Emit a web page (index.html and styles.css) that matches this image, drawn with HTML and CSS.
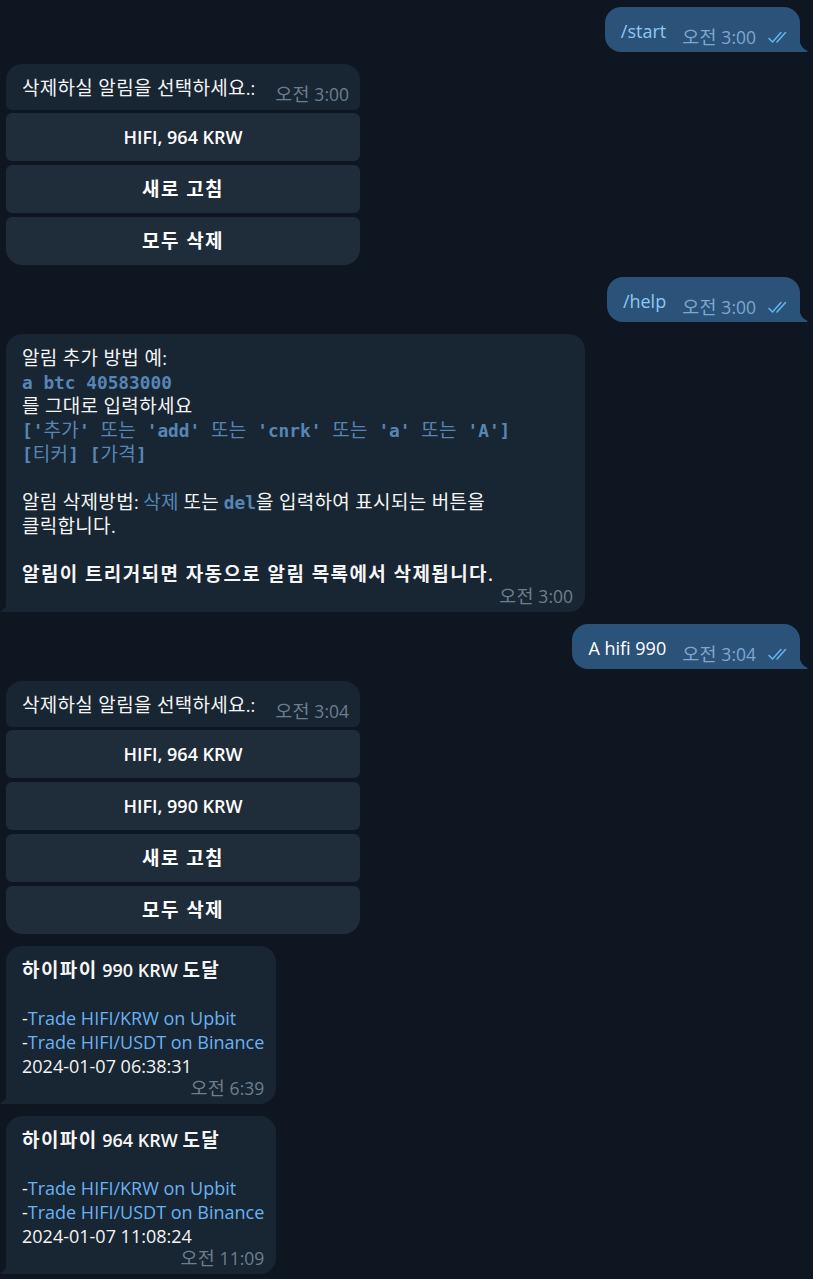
FILE: index.html
```html
<!DOCTYPE html>
<html lang="ko">
<head>
    <meta charset="UTF-8">
    <meta name="viewport" content="width=device-width, initial-scale=1.0">
    <title>Alert Bot</title>
    <link rel="stylesheet" href="styles.css">
</head>
<body>
    <div class="chat">
        <div class="row out">
            <div class="bubble out-bubble">
                <span class="cmd">/start</span>
                <span class="meta"><span><span class="ko">오전</span> 3:00</span>
                    <svg class="checks" viewBox="0 0 22 14"><path d="M1 8.5 L4.5 12 L13 2.5 M9 12 L17.5 2.5"/></svg>
                </span>
                <svg class="tail-out" viewBox="0 0 9 17"><path d="M0 0 C0 8 2.5 13 8 15.6 C9 16.1 8.6 17 7.6 17 L0 17 Z"/></svg>
            </div>
        </div>

        <div class="row in">
            <div class="kb-group">
                <div class="bubble in-bubble kb-msg">
                    <span><span class="ko">삭제하실 알림을 선택하세요</span>.:</span>
                    <span class="meta"><span class="ko">오전</span> 3:00</span>
                </div>
                <div class="kb">
                    <button>HIFI, 964 KRW</button>
                    <button><span class="ko">새로 고침</span></button>
                    <button class="last"><span class="ko">모두 삭제</span></button>
                </div>
            </div>
        </div>

        <div class="row out">
            <div class="bubble out-bubble">
                <span class="cmd">/help</span>
                <span class="meta"><span><span class="ko">오전</span> 3:00</span>
                    <svg class="checks" viewBox="0 0 22 14"><path d="M1 8.5 L4.5 12 L13 2.5 M9 12 L17.5 2.5"/></svg>
                </span>
                <svg class="tail-out" viewBox="0 0 9 17"><path d="M0 0 C0 8 2.5 13 8 15.6 C9 16.1 8.6 17 7.6 17 L0 17 Z"/></svg>
            </div>
        </div>

        <div class="row in">
            <div class="bubble in-bubble block-msg help">
                <div class="text">
                    <span class="ko">알림 추가 방법 예</span>:<br>
                    <code>a btc 40583000</code><br>
                    <span class="ko">를 그대로 입력하세요</span><br>
                    <code>['<span class="k ko">추가</span>' <span class="k ko">또는</span> 'add' <span class="k ko">또는</span> 'cnrk' <span class="k ko">또는</span> 'a' <span class="k ko">또는</span> 'A']</code><br>
                    <code>[<span class="k ko">티커</span>] [<span class="k ko">가격</span>]</code><br>
                    <br>
                    <span class="ko">알림 삭제방법</span>: <span class="hl ko">삭제</span> <span class="ko">또는</span> <code>del</code><span class="ko">을 입력하여 표시되는 버튼을</span><br>
                    <span class="ko">클릭합니다</span>.<br>
                    <br>
                    <b><span class="ko">알림이 트리거되면 자동으로 알림 목록에서 삭제됩니다</span>.</b>
                </div>
                <div class="meta"><span class="ko">오전</span> 3:00</div>
                <svg class="tail-in" viewBox="0 0 9 17"><path d="M9 0 C9 8 6.5 13 1 15.6 C0 16.1 0.4 17 1.4 17 L9 17 Z"/></svg>
            </div>
        </div>

        <div class="row out">
            <div class="bubble out-bubble">
                <span>A hifi 990</span>
                <span class="meta"><span><span class="ko">오전</span> 3:04</span>
                    <svg class="checks" viewBox="0 0 22 14"><path d="M1 8.5 L4.5 12 L13 2.5 M9 12 L17.5 2.5"/></svg>
                </span>
                <svg class="tail-out" viewBox="0 0 9 17"><path d="M0 0 C0 8 2.5 13 8 15.6 C9 16.1 8.6 17 7.6 17 L0 17 Z"/></svg>
            </div>
        </div>

        <div class="row in">
            <div class="kb-group">
                <div class="bubble in-bubble kb-msg">
                    <span><span class="ko">삭제하실 알림을 선택하세요</span>.:</span>
                    <span class="meta"><span class="ko">오전</span> 3:04</span>
                </div>
                <div class="kb">
                    <button>HIFI, 964 KRW</button>
                    <button>HIFI, 990 KRW</button>
                    <button><span class="ko">새로 고침</span></button>
                    <button class="last"><span class="ko">모두 삭제</span></button>
                </div>
            </div>
        </div>

        <div class="row in">
            <div class="bubble in-bubble block-msg">
                <div class="text">
                    <b><span class="ko">하이파이</span> 990 KRW <span class="ko">도달</span></b><br>
                    <br>
                    -<a href="#">Trade HIFI/KRW on Upbit</a><br>
                    -<a href="#">Trade HIFI/USDT on Binance</a><br>
                    2024-01-07 06:38:31
                </div>
                <div class="meta"><span class="ko">오전</span> 6:39</div>
                <svg class="tail-in" viewBox="0 0 9 17"><path d="M9 0 C9 8 6.5 13 1 15.6 C0 16.1 0.4 17 1.4 17 L9 17 Z"/></svg>
            </div>
        </div>

        <div class="row in">
            <div class="bubble in-bubble block-msg">
                <div class="text">
                    <b><span class="ko">하이파이</span> 964 KRW <span class="ko">도달</span></b><br>
                    <br>
                    -<a href="#">Trade HIFI/KRW on Upbit</a><br>
                    -<a href="#">Trade HIFI/USDT on Binance</a><br>
                    2024-01-07 11:08:24
                </div>
                <div class="meta"><span class="ko">오전</span> 11:09</div>
                <svg class="tail-in" viewBox="0 0 9 17"><path d="M9 0 C9 8 6.5 13 1 15.6 C0 16.1 0.4 17 1.4 17 L9 17 Z"/></svg>
            </div>
        </div>
    </div>
</body>
</html>
```

FILE: styles.css
```css
body {
    margin: 0;
    background-color: #0e1621;
    font-family: 'Open Sans', 'Noto Sans CJK KR', sans-serif;
    font-size: 18px;
    line-height: 24px;
    color: #f5f5f5;
}

.chat {
    display: flex;
    flex-direction: column;
    gap: 12px;
    padding: 7px 0 5px;
}

.row {
    display: flex;
}

.row.out {
    justify-content: flex-end;
    padding-right: 13px;
}

.row.in {
    justify-content: flex-start;
    padding-left: 6px;
}

.bubble {
    position: relative;
    border-radius: 16px;
}

/* hangul runs: wider, like the desktop client's korean fallback */
.ko {
    font-size: 19px;
    letter-spacing: 0.3px;
    line-height: 20px;
}

b .ko,
button .ko {
    letter-spacing: 1.4px;
}

.meta .ko {
    font-size: 18.5px;
}

/* outgoing */
.out-bubble {
    display: flex;
    align-items: flex-start;
    background-color: #2b5278;
    color: #ffffff;
    padding: 12px 10px 5px 16px;
    border-bottom-right-radius: 0;
}

.out-bubble .meta {
    display: flex;
    align-items: center;
    gap: 12px;
    margin-left: 16px;
    margin-top: 8px;
    color: #7da8d3;
}

.cmd {
    color: #8ec8f6;
}

.checks {
    width: 22px;
    height: 14px;
    fill: none;
    stroke: #62b3f0;
    stroke-width: 1.6;
    stroke-linecap: round;
    stroke-linejoin: round;
}

.tail-out {
    position: absolute;
    right: -8px;
    bottom: 0;
    width: 9px;
    height: 17px;
    fill: #2b5278;
}

.tail-in {
    position: absolute;
    left: -6px;
    bottom: 0;
    width: 9px;
    height: 17px;
    fill: #182533;
}

/* incoming */
.in-bubble {
    background-color: #182533;
}

.meta {
    color: #6d7f8f;
    font-size: 17.5px;
    line-height: 20px;
    white-space: nowrap;
}

.kb-group {
    width: 354px;
    display: flex;
    flex-direction: column;
    gap: 3px;
}

.kb-msg {
    display: flex;
    justify-content: space-between;
    align-items: flex-start;
    padding: 12px 11px 6px 16px;
    border-radius: 16px 16px 6px 6px;
}

.kb-msg .meta {
    margin-top: 8px;
}

.kb {
    display: grid;
    gap: 4px;
}

.kb button {
    height: 48px;
    border: none;
    border-radius: 6px;
    background-color: #1f2c3a;
    color: #ffffff;
    font-family: 'Open Sans', 'Noto Sans CJK KR', sans-serif;
    font-size: 18px;
    font-weight: 600;
    cursor: pointer;
}

.kb button.last {
    border-radius: 6px 6px 16px 16px;
}

.block-msg {
    padding: 12px 12px 6px 16px;
    border-bottom-left-radius: 0;
}

.block-msg .meta {
    text-align: right;
}

.help {
    width: 551px;
}

code {
    font-family: 'DejaVu Sans Mono', 'Noto Sans CJK KR', monospace;
    font-size: 17.8px;
    font-weight: 600;
    line-height: 20px;
    color: #5785b5;
}

code .k,
.hl {
    font-family: 'Open Sans', 'Noto Sans CJK KR', sans-serif;
    font-weight: 400;
    color: #5785b5;
}

a {
    color: #6ab2f2;
    text-decoration: none;
}

b {
    font-weight: 600;
}
```
